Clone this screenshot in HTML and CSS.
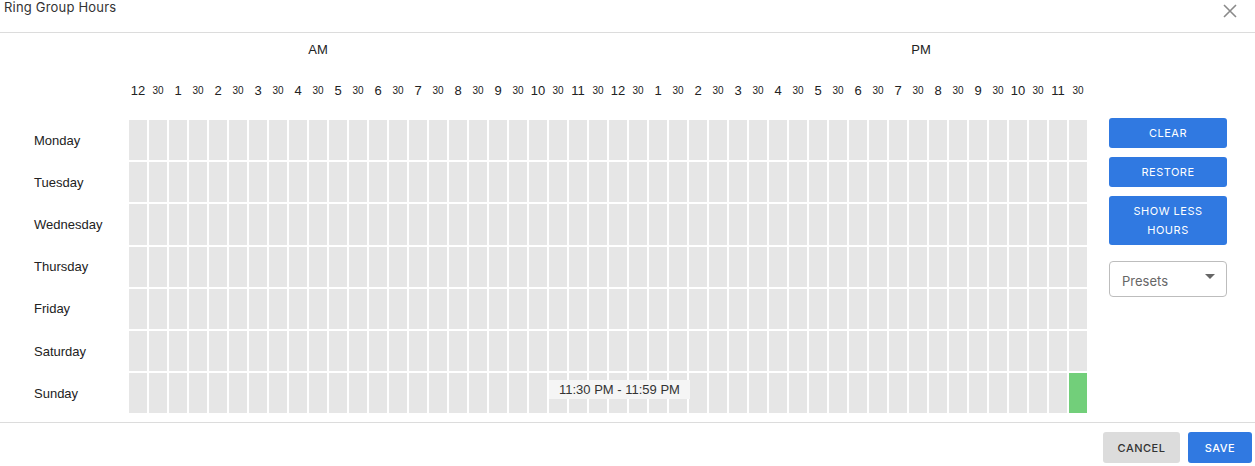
FILE: index.html
```html
<!DOCTYPE html>
<html>
<head>
<meta charset="utf-8">
<link rel="stylesheet" href="styles.css">
</head>
<body>
<div class="dialog">
  <header class="head">
    <div class="title">Ring Group Hours</div>
    <button class="close" aria-label="close">
      <svg width="14" height="14" viewBox="0 0 14 14"><path d="M1 1 L13 13 M13 1 L1 13" stroke="#8a8a8a" stroke-width="1.6" fill="none"/></svg>
    </button>
  </header>
  <main class="content">
    <div class="schedule">
      <div class="ampm"><span class="am">AM</span><span class="pm">PM</span></div>
      <div class="hours" id="hours"></div>
      <div class="table">
        <div class="days">
          <div class="day">Monday</div>
          <div class="day">Tuesday</div>
          <div class="day">Wednesday</div>
          <div class="day">Thursday</div>
          <div class="day">Friday</div>
          <div class="day">Saturday</div>
          <div class="day">Sunday</div>
        </div>
        <div class="grid" id="grid">
          <div class="tooltip">11:30 PM - 11:59 PM</div>
        </div>
      </div>
    </div>
    <aside class="side">
      <button class="btn">CLEAR</button>
      <button class="btn">RESTORE</button>
      <button class="btn tall">SHOW LESS<br>HOURS</button>
      <div class="select">
        <span class="sel-label">Presets</span>
        <svg width="10" height="6" viewBox="0 0 10 6"><path d="M0 0 L10 0 L5 5 Z" fill="#666"/></svg>
      </div>
    </aside>
  </main>
  <footer class="foot">
    <button class="fbtn cancel">CANCEL</button>
    <button class="fbtn save">SAVE</button>
  </footer>
</div>
<script>
  var hours = document.getElementById('hours');
  var labels = ['12','1','2','3','4','5','6','7','8','9','10','11'];
  for (var h = 0; h < 2; h++) {
    for (var i = 0; i < 12; i++) {
      var a = document.createElement('span'); a.className = 'hr'; a.textContent = labels[i]; hours.appendChild(a);
      var b = document.createElement('span'); b.className = 'half'; b.textContent = '30'; hours.appendChild(b);
    }
  }
  var grid = document.getElementById('grid');
  var tip = grid.firstElementChild;
  for (var r = 0; r < 7; r++) {
    for (var c = 0; c < 48; c++) {
      var d = document.createElement('div');
      d.className = 'cell' + (r === 6 && c === 47 ? ' on' : '');
      grid.insertBefore(d, tip);
    }
  }
</script>
</body>
</html>
```

FILE: styles.css
```css
* { box-sizing: border-box; }
html, body { margin: 0; padding: 0; background: #fff; }
body { font-family: "Liberation Sans", Arial, sans-serif; color: #222; width: 1255px; height: 466px; overflow: hidden; }

.dialog { display: flex; flex-direction: column; height: 466px; }

.head {
  height: 33px;
  border-bottom: 1px solid #dcdcdc;
  display: flex;
  justify-content: space-between;
  align-items: flex-start;
  padding-left: 4px;
  padding-right: 18px;
}
.title { font-family: "Inter", "Open Sans", sans-serif; font-size: 13px; line-height: 14px; color: #333; letter-spacing: 0.2px; }
.close { border: 0; background: none; padding: 0; margin-top: 4px; width: 14px; height: 14px; display: flex; }

.content { display: flex; height: 389px; }

.schedule { width: 1087px; flex-shrink: 0; display: flex; flex-direction: column; }
.ampm { display: flex; padding-left: 129px; margin-top: 9px; font-size: 13px; line-height: 16px; color: #222; }
.am { width: 378px; flex-shrink: 0; text-align: center; }
.pm { width: 200px; margin-left: 314px; flex-shrink: 0; text-align: center; }

.hours {
  margin-top: 24px;
  margin-left: 129px;
  display: grid;
  grid-template-columns: repeat(48, 18px);
  column-gap: 2px;
  height: 16px;
  align-items: center;
  color: #222;
}
.hours span { text-align: center; white-space: nowrap; display: flex; justify-content: center; }
.hr { font-size: 13px; }
.half { font-size: 10px; }

.table { display: flex; margin-top: 22px; }
.days { width: 129px; padding-left: 34px; display: flex; flex-direction: column; gap: 2px; }
.day { height: 40.2px; display: flex; align-items: center; font-size: 13px; color: #222; }

.grid {
  position: relative;
  display: grid;
  grid-template-columns: repeat(48, 18px);
  grid-auto-rows: 40.2px;
  gap: 2px;
}
.cell { background: #e6e6e6; }
.cell.on { background: #72cf7a; }
.tooltip {
  position: absolute;
  left: 420px;
  top: 260px;
  height: 19px;
  padding: 0 10px;
  background: #f5f5f5;
  color: #333;
  font-size: 13px;
  line-height: 19px;
  white-space: nowrap;
}

.side { width: 118px; margin-left: 22px; padding-top: 85px; display: flex; flex-direction: column; gap: 9px; }
.btn {
  border: 0;
  border-radius: 3px;
  background: #3079e1;
  color: #fff;
  height: 30px;
  font-family: "Inter", "Open Sans", sans-serif;
  font-weight: 400;
  font-size: 11px;
  letter-spacing: 0.5px;
  line-height: 19px;
  padding: 0;
}
.btn.tall { height: 49px; }
.select {
  margin-top: 7px;
  height: 36px;
  border: 1px solid #bdbdbd;
  border-radius: 4px;
  display: flex;
  align-items: center;
  justify-content: space-between;
  padding: 0 11px 0 12px;
  font-family: "Inter", "Open Sans", sans-serif;
  font-size: 13px;
  color: #666;
}
.sel-label { padding-top: 3px; }
.select svg { margin-top: -4px; }

.foot {
  flex: 1;
  border-top: 1px solid #dcdcdc;
  display: flex;
  justify-content: flex-end;
  align-items: flex-start;
  padding-top: 9px;
  padding-right: 3px;
  gap: 8px;
}
.fbtn {
  border: 0;
  border-radius: 3px;
  height: 31px;
  font-family: "Inter", "Open Sans", sans-serif;
  font-weight: 500;
  font-size: 11px;
  letter-spacing: 0.5px;
  padding: 0;
}
.cancel { width: 77px; background: #dcdcdc; color: #333; }
.save { width: 64px; background: #3079e1; color: #fff; }
```
